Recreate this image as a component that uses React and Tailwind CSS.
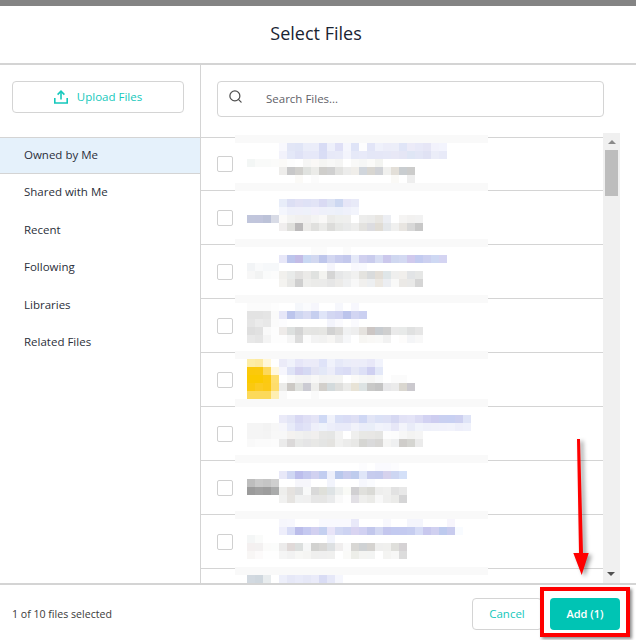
import { Search } from 'lucide-react';

const navItems = ['Shared with Me', 'Recent', 'Following', 'Libraries', 'Related Files'];

// the blurred-out file thumbnails and names: [top, left, colours of 8px cells]
const mosaic = [
  [143, 279, 'f8f8fd e2e6f6 e0e5f6 eaedf9 ebedf9 d8dcf5 eef0fb dfe0f6 f5f6fd dfe4f7 fdfdfe e2e5f7 eff1fb ecedf9 eceef9 e0e5f7 ecebf8 e8e9f8 e6e6f6 f2f2fc f3f4fd'],
  [151, 279, 'f2f2fb e4e8f8 dfe2f6 e6e8f8 e6e8f8 d9ddf5 e7e9f8 e8eaf8 f3f4fc e6e9f8 e8eaf9 e4e7f7 e5e7f7 e6e8f7 e8e8f6 e5e6f5 dfe6f5 e3e6f6 e0e2f4 ebedf8 e8eaf8'],
  [159, 247, 'f3f6f5 f9faf9 f9faf9 fbfbfa fbfaf8 fdfdfd ffffff f6f6f5 faf8f6 f5f5f3 f8f8f7 f5f5f4 ffffff f9f9f8 f6f7f6 fbfbf9 f3f4f1'],
  [167, 279, 'eeedeb c8c8c9 d1d0cd e0e2df ebebe8 cfcecb d0d0d0 e2e2e0 ececeb f0eeea d1d6dc d8d6d1 d0d2d6 f0f0ee e3dfd8 c9cdd0 cccccb'],
  [175, 295, 'fbfaf7 ffffff fbfbfb'],
  [175, 391, 'faf9f6 ffffff eeeeee'],
  [199, 279, 'e8edf9 dcdff4 e2e2f5 dfe2f6 e2e4f6 d9daf3 dde3f4 cdd8f1 e6e6f7 e8eaf8'],
  [207, 279, 'f4f6fd eef0fa eff0fa eef1fa f1f0fb eef0fa eef1fa ecf0fa eff1fb f2f4fc'],
  [215, 247, 'c1c6dc c1c5dc bcc2d8 d8dbe6 fbfaf9 f3f3f2 f1f0ef f0efef f4f4f3 f9f8f7 ebebe9 eeefed efefee ffffff ededec ebebea e8e6e2 eceef3 ffffff f5f4f3 f2f1f0 f2f2f2'],
  [223, 279, 'f0eeee dfdfdc bcbabb ecebe9 e0e0de ebebe9 dcdcda e6e7e5 e9eaea eeeeed e3e2df dcdce0 e0dcd5 e4e7ea f0f0ef e8e5e1 d8d8d8 c8c8c8'],
  [247, 311, 'fbfbfb fbfbfb ffffff ffffff fbfbfb'],
  [255, 279, 'e7e7f8 bcc5ec c3bce6 c9d8f3 d2d8f0 bec6eb d3d7f1 c9cdee c3c8ec e5e9f8 d0d0ef c9cced d7ddf3 cbc8ec cfd7f0 d3d9f2 d0c9ed c3cbf0 ccd0f0 ced8f3 d4d4f2'],
  [263, 247, 'f2f4f6 f9fafb f6f8fa f6f8fa'],
  [263, 327, 'f5f5fc ffffff ffffff f8f8fd f9fafe'],
  [271, 247, 'f7f7f7 f2f3f3 fafbfb fcfcfc f1f0ed e9ebea e2e1e0 ebeae8 e0e2e0 f3f3f0 d5d5d5 e6e7e8 ebecec f1f1f0 e4e3df d9dbdc e3ded7 dfe6e8 efefee f1efec e2e4e6 e6e7e6'],
  [279, 279, 'f4f3f0 e8e8e6 cfcfcf eeeeec ebebe9 ebebea e6e6e6 ecebe9 eff0f1 f8f8f8 f1f0ee edeff1 ece8e2 eceef2 f9f9f8 ebe9e6 e9e9e8 d5d5d5'],
  [303, 247, 'fbfbfb fbfbfb fbfbfb fdfdfd'],
  [303, 295, 'f5f7fb fafbfd f6f6fc ffffff ffffff f6f7fc ffffff f7f7fd'],
  [311, 247, 'e3e3e3 e3e3e3 e5e5e5 fafafa e7e7f8 bcc5ec cfd6f1 d9dcf3 c6cfef e0e5f8 d3d7f2 d0d3f2 bcc4ec d2d5f2 cbd0f1'],
  [319, 247, 'e5e5e5 ebebeb e8e8e8 fbfbfb fcfcfe'],
  [319, 327, 'f3f4fc fafafe ffffff fafafe'],
  [327, 247, 'dedede e1e1e1 f9f9f9 fdfdfd eeebe9 dde0df d4d4d4 e5e5e3 e4e4e2 e6e6e3 d2d2d2 dcdbd9 f0f1f2 eeeeee e5e2de ccc6c4 c8ccd0 cfcfcf eaeaea e8eae9 e0e1e1 e6e6e6'],
  [335, 247, 'e8e8e8 e5e5e5 f4f4f4 fdfdfd fdfdfd f5f5f5 dcdcdc fcfcfc f3f3f3 f2f2f1 f7f6f4 ececec f6f7f9 ffffff f7f6f3 f9f8f6 f9f9f8 f2f2f2 ffffff fdfcfb f4f5f7 f8f8f8'],
  [359, 247, 'fdeda6 fdeaa0 fff7d9 ffffff ebebf8 f0f2fb e6e6f8 ebebf9 ebebf8 dfe3f8 f0f2fb e6e9f8 ebedf9 ededf9 ecedf9 e8e8f8 f1f3fc'],
  [367, 247, 'fbc90a fbc90c fdd85a fff8df f6f6fd dfe3f6 d4d2f0 d5d9f3 e3e4f4 e3e8f7 ecedf9 dcdff6 dadcf5 e6e8f6 dde0f6 cfd0f1 e3e8f8'],
  [375, 247, 'fbca00 fbca00 fcca10 fedf70 ffffff f9f9f9 f4f4f4 f3f3f4 f8f8f7 f2f2f2 f3f3f3 f4f4f3 ffffff fbfaf8 f6f7f6 f5f5f4 f8f9fa ffffff fbfbfb fbfbfb'],
  [383, 247, 'fbc90f fccb20 fcc916 fedd6b ebebe9 ccc9c5 e0e2df cbcbd3 eeeeec d2cfcb d3dadc dfdfdd ebebe9 e8e3d6 dde3e3 c9c9c8 c4c4c4 e8e8ea ebebeb dad7d0 cbc9ce'],
  [391, 247, 'fcd95a fcd95a fcd95a feeeb2 f9f9f9 ffffff ffffff ffffff fafafa'],
  [415, 279, 'eaeaf8 e3e5f6 d8d8f3 dfdff5 e4e4f6 cfd9f5 f0f2fb d9dff6 d9dcf5 dedff4 cfd7f4 e2e5f6 dbe1f6 dde0f5 d6d8f2 e2e2f6 e4e4f7 dcdcf4 d2d2f2 cdcdf0 c9d0f1 c8d0f2 cdd0f0 dfe4f7'],
  [423, 247, 'f5f5f5 f5f5f5 f3f3f3 f7f7f7 f6f6fb e8ebf9 dddff6 e1e3f7 eeeffa eff3fb eceefa e9ebf9 e9ebf9 f1f2fa eaedf9 e9eef8 f1f3fb eff1fb e7e7f7 f3f4fb e9ecf8 f1f4fb eff1fa f0f2fa f1f2fb f2f3fb eeeffa eff1fb'],
  [431, 247, 'f5f5f5 f5f5f5 f4f4f4 f8f8f8 f8f8f8 f4f2f0 f1f1f0 eeeeee f1efee e7e7e6 e5e6e5 f2f2f2 ffffff efefee e8e8e5 e8e7e5 e5e5e3 fdfdfd fcfcfc f7f7f7 f3f3f2 f5f5f5'],
  [439, 247, 'f9f9f9 fbfbfb fbfbfb fcfcfc ebebeb dbd9d9 e8e9e8 e5e5e6 e8e8e6 e4e5e4 e4e3e0 f1f1f0 ececeb e8e8e6 d6d6d3 dadadb d8d7d5 f5f5f4 eff0f1 cfcdca d5d5d1 ebebeb'],
  [463, 359, 'fcfcfe ffffff fafafe fafafe fcfcfe'],
  [471, 279, 'e8e8f8 d0d7f3 bcbeec c5c9ef d1d1f0 c2cdf0 eef0fb b9c8ec c9cdee bfcced e0e6f8 c7ccee c5cbee d6d2ed cdd6f2 d4e0f8'],
  [479, 247, 'bdbdbd c9c9c9 c5c5c5 cfcfcf ffffff ffffff f6f6fb f6f6fb ffffff ffffff f2f4fc'],
  [479, 359, 'f6f7fd fafbfe'],
  [487, 247, '9b9b9b a1a1a1 9d9d9d aaabab eeeeec e5e2df dedfe0 f8f9f9 d9d9d9 dfe0da dee3e5 eef0ef f9faf6 d1d0d2 e0e0dc dadad6 eeeeed f0f0ef e2e2e2 e8e8e8'],
  [495, 279, 'f1f1f0 e6e4e1 f0f1f1 f0f0f0 e6e6e6 e6e6e5 eaebec f9f9f9 fefefe e2e0e5 efefed ebebe8 f8f8f8 efefee ebebe9 d5d5d6'],
  [519, 279, 'f6f6fc f7f7fd'],
  [519, 319, 'f9f9fe f9f9fe f9f9fe f9f9fe e9e9f9'],
  [519, 383, 'f8f8fd'],
  [519, 407, 'f4f5fc f4f5fc'],
  [519, 447, 'f7f5fc'],
  [527, 279, 'eeeefb d8dcf6 bbbdea c5c9f0 d2d0f0 c4d0f0 e8e4f8 d2d8f3 cdd3f2 d9d4f1 d1d1f2 c2c7ec d3d8f2 c4c7ee c3caf0 c4caf0 c6cdf0 d6dcf6 c8c8ee d0d0f0 bdcaee c8cbee f8fbff'],
  [535, 247, 'f4f6f6 fafbfa'],
  [535, 327, 'f2f4fc'],
  [543, 247, 'f4f0f0 f3f1f1 fbfbfa fbfcfb ecebeb e0d9d8 dcdfde f6f7f7 d2d2d0 d8d7d5 dde0e2 f0eeee fafafa d8d7d4 cfd2d4 d5d3d0 efefee f0f0ee dfdfdb d5d2d4'],
  [551, 247, 'f8f6f5 fcfafa fefefe fefefe f5f5f5 f2f2f2 f7f7f5 f5f5f3 efefee efefef f0f0ef ffffff fafaf8 edeee9 f4f4f2 f3f4f3 ffffff f4f4f2 f7f7f6 dcdcdc'],
  [575, 247, 'd2d9e0 cfd7de e8ecee ffffff edeffa e6e8f7 e9ebf9 e6e8f7 eaebf9 d9dcf4 e6e8f8 f5f6fd'],
];

const bands = [135, 183, 239, 295, 351, 399, 455, 511, 567];

function Mosaic() {
  return (
    <svg className="absolute left-[34px] top-[2px]" width="253" height="448" viewBox="235 135 253 448" shapeRendering="crispEdges">
      {bands.map((y) => (
        <rect key={y} x="235" y={y} width="253" height="8" fill="#f9f9f9" />
      ))}
      {mosaic.flatMap(([y, x, cells]) =>
        cells.split(' ').map((c, i) => (
          <rect key={`${y}-${x}-${i}`} x={x + i * 8} y={y} width="8" height="8" fill={`#${c}`} />
        ))
      )}
    </svg>
  );
}

function UploadIcon() {
  return (
    <svg width="14" height="14" viewBox="0 0 14 14" fill="none" stroke="#14c8bc" strokeWidth="1.6">
      <path d="M7 9.5V1.5" />
      <path d="M3.6 4.6L7 1.2l3.4 3.4" />
      <path d="M.8 8v5h12.4V8" />
    </svg>
  );
}

export default function App() {
  return (
    <div className="relative w-[636px] h-[640px] overflow-hidden bg-white flex flex-col font-['Open_Sans',sans-serif] text-[#2b2f3a]">
      <div className="h-[6px] bg-[#848484]" />

      <div className="h-[59px] shrink-0 border-b-2 border-[#d4d4d4] pr-1 pb-0.5 flex items-center justify-center">
        <h1 className="text-[18px] text-[#1a2433]">Select Files</h1>
      </div>

      <div className="flex-1 min-h-0 flex">
        {/* Sidebar */}
        <div className="w-[201px] shrink-0 border-r border-[#d4d4d4] pt-4">
          <div className="ml-3 w-[172px] h-8 border border-[#d4d4d4] rounded flex items-center justify-center gap-[9px] text-[11.5px] text-[#14c8bc]">
            <UploadIcon />
            Upload Files
          </div>
          <div className="mt-6 h-[37px] bg-[#e5f1fb] border-y border-[#d4d4d4] pl-6 pb-0.5 flex items-center text-[11.5px]">
            Owned by Me
          </div>
          <div className="-mt-[0.75px]">
            {navItems.map((item) => (
              <div key={item} className="h-[37.5px] pl-6 flex items-center text-[11.5px]">
                {item}
              </div>
            ))}
          </div>
        </div>

        {/* Files */}
        <div className="flex-1 min-w-0 flex flex-col">
          <div className="h-[68px] shrink-0 pl-4 pr-8 pt-4">
            <div className="h-9 border border-[#d4d4d4] rounded flex items-center text-[11.5px] text-[#5f6268]">
              <Search size={15} strokeWidth={2} className="ml-[10px] mr-[23px] -mt-1.5 text-[#4f4f4f]" />
              Search Files...
            </div>
          </div>
          <div className="relative flex-1 min-h-0 flex">
            <div className="w-[402px] pt-1 overflow-hidden">
              <div className="border-t border-[#d4d4d4]" />
              {[0, 1, 2, 3, 4, 5, 6, 7, 8].map((i) => (
                <div key={i} className={`${i === 0 ? 'h-[53px]' : 'h-[54px]'} shrink-0 border-b border-[#d4d4d4] pl-4 flex items-center`}>
                  <div className="w-4 h-4 border border-[#d0d0d0] rounded-[2px]" />
                </div>
              ))}
            </div>
            <Mosaic />
            <div className="w-[17px] bg-[#f0f0f0] relative">
              <div className="mx-auto mt-[7px] w-0 h-0 border-x-[4px] border-x-transparent border-b-[4px] border-b-[#8a8a8a]" />
              <div className="mx-auto mt-[6px] w-[13px] h-[46px] bg-[#bdbdbd]" />
              <div className="absolute bottom-[7px] left-[4px] w-0 h-0 border-x-[4px] border-x-transparent border-t-[4px] border-t-[#505050]" />
            </div>
          </div>
        </div>
      </div>

      <div className="h-[57px] shrink-0 border-t-2 border-[#d4d4d4] pl-3 pr-4 flex items-center justify-between">
        <span className="text-[10.6px] text-[#3a3a3a] pt-[5px]">1 of 10 files selected</span>
        <div className="flex items-center gap-2 pt-[3px]">
          <button className="w-[70px] h-8 border border-[#d4d4d4] rounded text-[11.5px] text-[#14c8bc]">Cancel</button>
          <button className="w-[70px] h-8 bg-[#00c4b4] rounded text-[11px] font-semibold text-white">Add (1)</button>
        </div>
      </div>

      {/* Annotation drawn over the screenshot */}
      <div className="absolute left-[540px] top-[587px] w-[90px] h-[50px] border-4 border-[#f00] shadow-[2px_2px_3px_rgba(0,0,0,0.45)]" />
      <svg className="absolute left-[565px] top-[432px] drop-shadow-[3px_2px_2px_rgba(0,0,0,0.4)]" width="36" height="150" viewBox="565 432 36 150">
        <path d="M577 439h3l3 114h5.700l-7 22-8.400-22h5.700z" fill="#f00" />
      </svg>
    </div>
  );
}
